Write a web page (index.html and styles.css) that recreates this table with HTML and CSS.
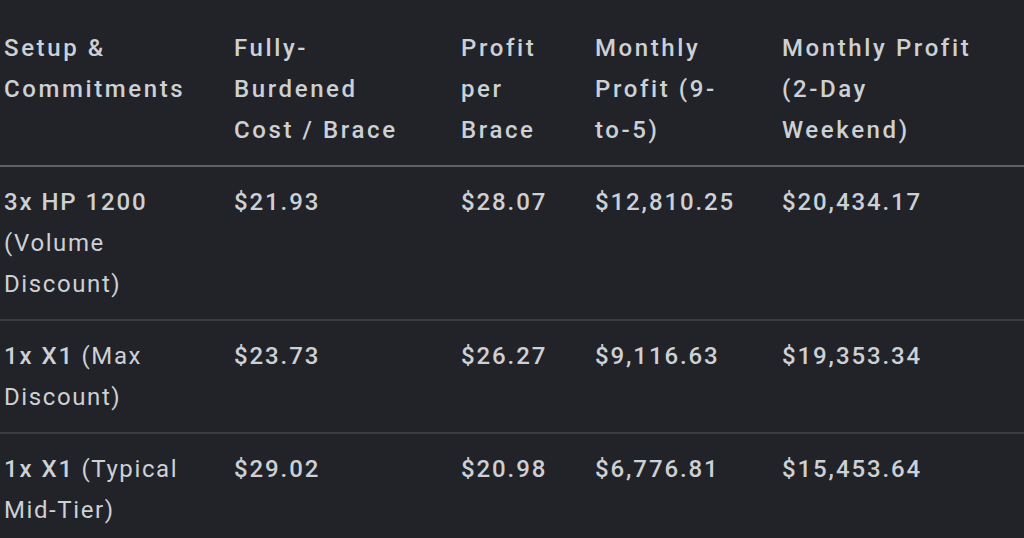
FILE: index.html
```html
<!DOCTYPE html>
<html>
<head>
<meta charset="utf-8">
<link rel="stylesheet" href="styles.css">
</head>
<body>
<table class="data">
  <colgroup>
    <col class="c1"><col class="c2"><col class="c3"><col class="c4"><col class="c5">
  </colgroup>
  <thead>
    <tr>
      <th>Setup &amp;<br>Commitments</th>
      <th>Fully-<br>Burdened<br>Cost / Brace</th>
      <th>Profit<br>per<br>Brace</th>
      <th>Monthly<br>Profit (9-<br>to-5)</th>
      <th>Monthly Profit<br>(2-Day<br>Weekend)</th>
    </tr>
  </thead>
  <tbody>
    <tr>
      <td><b>3x HP 1200</b><br>(Volume<br>Discount)</td>
      <td><b>$21.93</b></td>
      <td><b>$28.07</b></td>
      <td><b>$12,810.25</b></td>
      <td><b>$20,434.17</b></td>
    </tr>
    <tr>
      <td><b>1x X1</b> (Max<br>Discount)</td>
      <td><b>$23.73</b></td>
      <td><b>$26.27</b></td>
      <td><b>$9,116.63</b></td>
      <td><b>$19,353.34</b></td>
    </tr>
    <tr>
      <td><b>1x X1</b> (Typical<br>Mid-Tier)</td>
      <td><b>$29.02</b></td>
      <td><b>$20.98</b></td>
      <td><b>$6,776.81</b></td>
      <td><b>$15,453.64</b></td>
    </tr>
  </tbody>
</table>
</body>
</html>
```
FILE: styles.css
```css
html, body {
  margin: 0;
  padding: 0;
  background: #212328;
  overflow: hidden;
}
body {
  font-family: Roboto, "Noto Sans", sans-serif;
  font-size: 24px;
  line-height: 41px;
  color: #cdd0d4;
}
.data {
  border-collapse: collapse;
  table-layout: fixed;
  width: 1024px;
  margin-top: 13px;
}
.c1 { width: 230px; }
.c2 { width: 227px; }
.c3 { width: 134px; }
.c4 { width: 187px; }
.c5 { width: 246px; }
.data th,
.data td {
  text-align: left;
  vertical-align: top;
  padding: 15px 4px 14px 4px;
  white-space: nowrap;
}
.data th {
  font-weight: 500;
  letter-spacing: 2.6px;
  border-bottom: 2px solid #5d5f63;
}
.data td {
  font-weight: 400;
  letter-spacing: 1.6px;
  border-bottom: 2px solid #3a3c40;
}
.data b {
  font-weight: 500;
  letter-spacing: 1.9px;
}
```
